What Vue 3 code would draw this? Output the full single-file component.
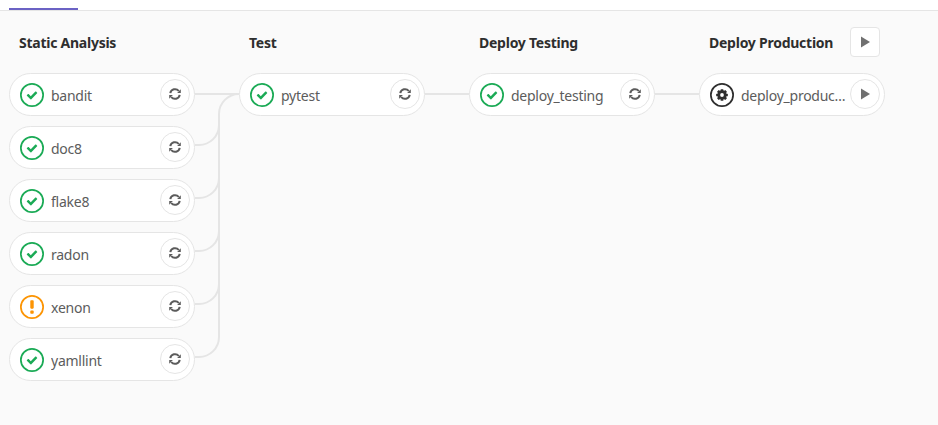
<script setup>
const check = 'M6.278 7.697L5.045 6.464a.296.296 0 0 0-.42-.002l-.613.614a.298.298 0 0 0 .002.42l1.91 1.909a.5.5 0 0 0 .703.004l.265-.265L9.997 6.04a.291.291 0 0 0-.009-.408l-.614-.614a.29.29 0 0 0-.408-.009L6.278 7.697z'
const stages = [
  { name: 'Static Analysis', jobs: [
    { name: 'bandit', status: 'ok' }, { name: 'doc8', status: 'ok' }, { name: 'flake8', status: 'ok' },
    { name: 'radon', status: 'ok' }, { name: 'xenon', status: 'warn' }, { name: 'yamllint', status: 'ok' }
  ] },
  { name: 'Test', jobs: [{ name: 'pytest', status: 'ok' }] },
  { name: 'Deploy Testing', jobs: [{ name: 'deploy_testing', status: 'ok' }] },
  { name: 'Deploy Production', play: true, jobs: [{ name: 'deploy_production', status: 'manual', play: true }] }
]
const teeth = [0, 45, 90, 135]
const links = [
  'M195 94H239',
  'M219 135V114A20 20 0 0 1 239 94',
  'M195 145H199A20 20 0 0 0 219 125V114',
  'M195 198H199A20 20 0 0 0 219 178V114',
  'M195 251H199A20 20 0 0 0 219 231V114',
  'M195 304H199A20 20 0 0 0 219 284V114',
  'M195 357H199A20 20 0 0 0 219 337V114',
  'M425 94H469',
  'M655 94H699'
]
</script>

<template>
  <div class="page">
    <nav class="tabs"><span class="active-tab"></span></nav>
    <main class="graph">
      <svg class="links" width="938" height="414" viewBox="0 11 938 414" fill="none" stroke="#e5e5e5" stroke-width="2">
        <path v-for="d in links" :key="d" :d="d" />
      </svg>
      <section v-for="stage in stages" :key="stage.name" class="stage">
        <header class="stage-head">
          <h2>{{ stage.name }}</h2>
          <button v-if="stage.play" class="stage-play" type="button">
            <svg width="14" height="14" viewBox="0 0 14 14"><path d="M3 1.5L12 7L3 12.5Z" fill="#707070" /></svg>
          </button>
        </header>
        <ul class="jobs">
          <li v-for="job in stage.jobs" :key="job.name" class="job">
            <svg v-if="job.status === 'ok'" class="status" viewBox="0 0 14 14" fill="#1aaa55">
              <path fill-rule="evenodd" d="M0 7a7 7 0 1 1 14 0A7 7 0 0 1 0 7zM13 7A6 6 0 1 0 1 7a6 6 0 0 0 12 0z" />
              <path :d="check" />
            </svg>
            <svg v-else-if="job.status === 'warn'" class="status" viewBox="0 0 14 14" fill="#fc9403">
              <path fill-rule="evenodd" d="M0 7a7 7 0 1 1 14 0A7 7 0 0 1 0 7zM13 7A6 6 0 1 0 1 7a6 6 0 0 0 12 0z" />
              <path d="M6 3.5c0-.3.2-.5.5-.5h1c.3 0 .5.2.5.5v4c0 .3-.2.5-.5.5h-1c-.3 0-.5-.2-.5-.5v-4zm0 6c0-.3.2-.5.5-.5h1c.3 0 .5.2.5.5v1c0 .3-.2.5-.5.5h-1c-.3 0-.5-.2-.5-.5v-1z" />
            </svg>
            <svg v-else class="status" viewBox="0 0 14 14" fill="#2e2e2e">
              <path fill-rule="evenodd" d="M0 7a7 7 0 1 1 14 0A7 7 0 0 1 0 7zM13 7A6 6 0 1 0 1 7a6 6 0 0 0 12 0z" />
              <rect v-for="a in teeth" :key="a" x="6.2" y="3.6" width="1.6" height="6.8" rx=".3" :transform="`rotate(${a} 7 7)`" />
              <circle cx="7" cy="7" r="2.7" />
              <circle cx="7" cy="7" r="1.1" fill="#fff" />
            </svg>
            <span class="job-name">{{ job.name }}</span>
            <button class="action" type="button">
              <svg v-if="job.play" width="14" height="14" viewBox="0 0 14 14"><path d="M3 1.5L12 7L3 12.5Z" fill="#707070" /></svg>
              <svg v-else width="14" height="14" viewBox="0 0 14 14" fill="none">
                <path d="M2.3 6.2A4.8 4.8 0 0 1 10.8 4M11.7 7.8A4.8 4.8 0 0 1 3.2 10" stroke="#5c5c5c" stroke-width="2" />
                <path d="M12.8 2.2V5.9H9.1ZM1.2 11.8V8.1H4.9Z" fill="#5c5c5c" />
              </svg>
            </button>
          </li>
        </ul>
      </section>
    </main>
  </div>
</template>

<style scoped>
.page {
  width: 938px;
  height: 425px;
  overflow: hidden;
  background: #fafafa;
  font-family: "Noto Sans", "Open Sans", sans-serif;
}
.tabs {
  height: 11px;
  box-sizing: border-box;
  background: #fff;
  border-bottom: 1px solid #e5e5e5;
  padding-left: 9px;
  display: flex;
  align-items: flex-end;
}
.active-tab {
  width: 69px;
  height: 2px;
  background: #6b62c4;
}
.graph {
  position: relative;
  display: flex;
  padding: 16px 0 0 9px;
}
.links {
  position: absolute;
  left: 0;
  top: 0;
}
.stage {
  position: relative;
  width: 230px;
  flex: none;
}
.stage-head {
  height: 30px;
  display: flex;
  align-items: center;
  padding-left: 10px;
  margin-bottom: 16px;
}
h2 {
  margin: 0;
  padding-top: 2px;
  font-size: 14px;
  line-height: 28px;
  font-weight: 700;
  color: #2e2e2e;
  letter-spacing: -0.25px;
  width: 141px;
  white-space: nowrap;
}
.stage-play {
  width: 30px;
  height: 30px;
  padding: 0;
  display: flex;
  align-items: center;
  justify-content: center;
  background: #fff;
  border: 1px solid #e5e5e5;
  border-radius: 4px;
}
.jobs {
  list-style: none;
  margin: 0;
  padding: 0;
}
.job {
  width: 186px;
  height: 43px;
  box-sizing: border-box;
  margin-bottom: 10px;
  padding: 0 4px 0 10px;
  display: flex;
  align-items: center;
  background: #fff;
  border: 1px solid #e5e5e5;
  border-radius: 22px;
}
.status {
  width: 24px;
  height: 24px;
  flex: none;
  margin-right: 7px;
}
.job-name {
  flex: 1;
  min-width: 0;
  overflow: hidden;
  white-space: nowrap;
  text-overflow: ellipsis;
  font-size: 14px;
  color: #5c5c5c;
  letter-spacing: -0.25px;
  padding-top: 2px;
}
.action {
  width: 30px;
  height: 30px;
  flex: none;
  margin-bottom: 2px;
  padding: 0;
  display: flex;
  align-items: center;
  justify-content: center;
  background: #fff;
  border: 1px solid #e5e5e5;
  border-radius: 50%;
}
</style>
